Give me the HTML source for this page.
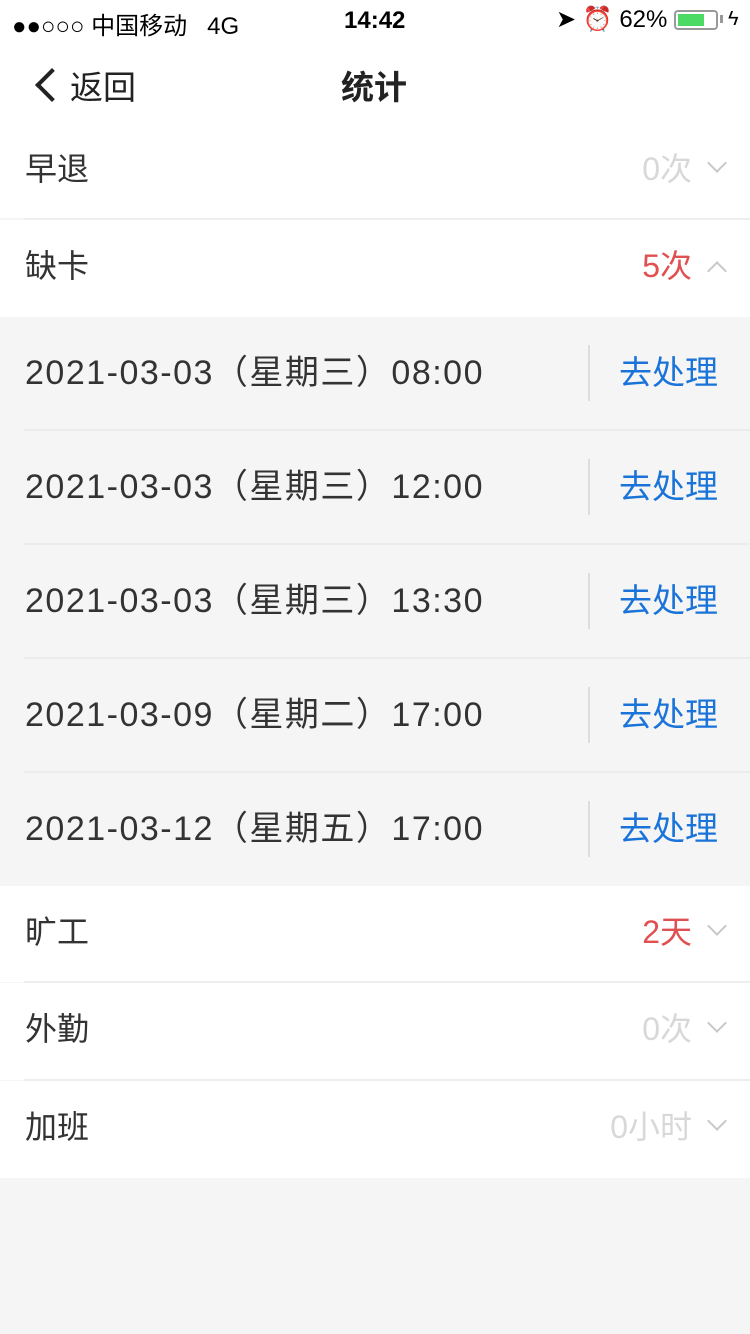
<!DOCTYPE html>
<html><head><meta charset="utf-8"><style>
*{margin:0;padding:0;box-sizing:border-box}
body{width:750px;height:1334px;background:#f5f5f5;font-family:"Liberation Sans","Noto Sans CJK SC",sans-serif;color:#333;position:relative;overflow:hidden}
.top{position:absolute;left:0;top:0;width:750px;height:120px;background:#fff}
.sb{position:absolute;top:5px;font-size:24px;color:#000}
.row{position:absolute;left:0;width:750px;background:#fff}
.row .l{position:absolute;left:25px;font-size:32px;line-height:32px}
.row .r{position:absolute;right:58px;font-size:32px;line-height:32px}
.line{position:absolute;left:24px;right:0;height:2px;background:#eeeeee}
.chev{position:absolute;right:26px;width:14px;height:14px;border-right:2px solid #c8c8c8;border-bottom:2px solid #c8c8c8}
.g{position:absolute;left:0;width:750px;height:114px;background:#f5f5f5}
.g .d{position:absolute;left:25px;top:37px;font-size:34px;letter-spacing:1.5px;line-height:38px;color:#333}
.g .v{position:absolute;left:588px;top:28px;width:2px;height:56px;background:#ddd}
.g .b{position:absolute;left:619px;top:38px;font-size:33px;line-height:36px;color:#1a73d8}
.g .ln{position:absolute;left:24px;right:0;bottom:0;height:2px;background:#ececec}
</style></head><body>
<div class="top">
 <div class="sb" style="left:12px;top:6px">●●○○○ 中国移动 &nbsp; 4G</div>
 <div class="sb" style="left:344px;top:7px;font-weight:bold">14:42</div>
 <div class="sb" style="left:556px">➤ ⏰ 62%</div>
 <div style="position:absolute;left:674px;top:10px;width:44px;height:20px;border:2px solid #999;border-radius:4px"><div style="position:absolute;left:2px;top:2px;width:26px;height:12px;background:#4cd964"></div></div>
 <div style="position:absolute;left:720px;top:15px;width:3px;height:8px;background:#999"></div>
 <div class="sb" style="left:728px;font-size:20px;top:8px">ϟ</div>
 <div style="position:absolute;left:40px;top:73px;width:24px;height:24px;border-left:4px solid #222;border-bottom:4px solid #222;transform:rotate(45deg)"></div>
 <div style="position:absolute;left:70px;top:61px;font-size:33px;color:#222">返回</div>
 <div style="position:absolute;left:341px;top:61px;font-size:33px;font-weight:bold;color:#222">统计</div>
</div>
<div class="row" style="top:120px;height:98px"><div class="l" style="top:33px">早退</div><div class="r" style="top:33px;color:#d8d8d8">0次</div><div class="chev" style="top:36px;transform:rotate(45deg)"></div></div>
<div class="line" style="top:218px"></div>
<div class="row" style="top:220px;height:97px"><div class="l" style="top:30px">缺卡</div><div class="r" style="top:30px;color:#e05050">5次</div><div class="chev" style="top:44px;transform:rotate(-135deg)"></div></div>
<div class="g" style="top:317px"><div class="d">2021-03-03（星期三）08:00</div><div class="v"></div><div class="b">去处理</div><div class="ln"></div></div>
<div class="g" style="top:431px"><div class="d">2021-03-03（星期三）12:00</div><div class="v"></div><div class="b">去处理</div><div class="ln"></div></div>
<div class="g" style="top:545px"><div class="d">2021-03-03（星期三）13:30</div><div class="v"></div><div class="b">去处理</div><div class="ln"></div></div>
<div class="g" style="top:659px"><div class="d">2021-03-09（星期二）17:00</div><div class="v"></div><div class="b">去处理</div><div class="ln"></div></div>
<div class="g" style="top:773px"><div class="d">2021-03-12（星期五）17:00</div><div class="v"></div><div class="b">去处理</div></div>
<div class="row" style="top:886px;height:96px"><div class="l" style="top:30px">旷工</div><div class="r" style="top:30px;color:#e05050">2天</div><div class="chev" style="top:33px;transform:rotate(45deg)"></div></div>
<div class="line" style="top:981px"></div>
<div class="row" style="top:983px;height:97px"><div class="l" style="top:30px">外勤</div><div class="r" style="top:30px;color:#d8d8d8">0次</div><div class="chev" style="top:33px;transform:rotate(45deg)"></div></div>
<div class="line" style="top:1079px"></div>
<div class="row" style="top:1081px;height:97px"><div class="l" style="top:30px">加班</div><div class="r" style="top:30px;color:#d8d8d8">0小时</div><div class="chev" style="top:33px;transform:rotate(45deg)"></div></div>
</body></html>
